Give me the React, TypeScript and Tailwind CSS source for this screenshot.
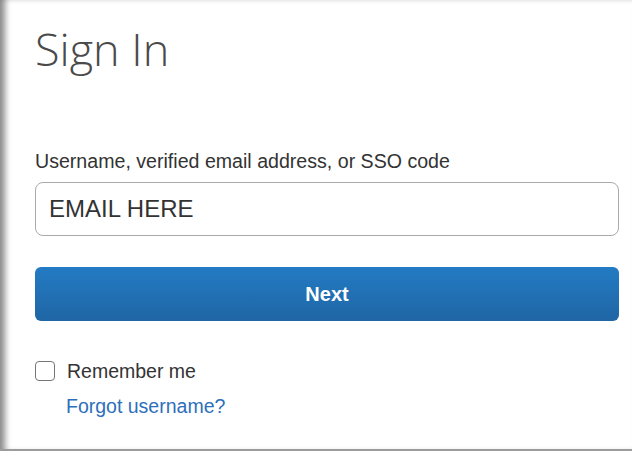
import { useState } from "react";

export default function App() {
  const [email, setEmail] = useState("EMAIL HERE");
  const [remember, setRemember] = useState(false);

  return (
    <div className="h-[451px] w-[632px] overflow-hidden bg-white">
      <div
        className="flex h-full flex-col border-b-2 border-[#9c9c9c] pl-[35px] pr-[13px] pt-[26px] shadow-[inset_9px_0_6px_-4px_rgba(0,0,0,0.45),inset_0_4px_4px_-3px_rgba(0,0,0,0.08)]"
        style={{ fontFamily: '"Liberation Sans", Arial, sans-serif' }}
      >
        <h1
          className="text-[45px] font-light leading-none text-[#4a4a4a]"
          style={{ fontFamily: '"Open Sans", sans-serif' }}
        >
          Sign In
        </h1>

        <label htmlFor="username" className="mt-[78px] text-[19.6px] leading-[24px] text-[#333]">
          Username, verified email address, or SSO code
        </label>
        <input
          id="username"
          value={email}
          onChange={(e) => setEmail(e.target.value)}
          className="mt-[9px] h-[54px] w-full rounded-[8px] border border-[#a9a9a9] bg-white pl-[13px] text-[24px] text-[#333] outline-none"
        />

        <button className="mt-[31px] h-[54px] w-full rounded-[6px] bg-gradient-to-b from-[#237bc3] to-[#1f66a5] text-[20px] font-bold text-white">
          Next
        </button>

        {/* remember checkbox */}
        <label className="mt-[38px] flex items-center gap-[12px] text-[19.5px] leading-[24px] text-[#333]">
          <span
            onClick={() => setRemember(!remember)}
            className="flex h-[20px] w-[20px] items-center justify-center rounded-[4px] border-[1.5px] border-[#767676] bg-white"
          >
            {remember && <span className="h-[10px] w-[10px] bg-[#1f66a5]" />}
          </span>
          Remember me
        </label>

        <a href="#" className="mt-[11px] pl-[31px] text-[19.5px] leading-[24px] text-[#2d6fbb]">
          Forgot username?
        </a>
      </div>
    </div>
  );
}
